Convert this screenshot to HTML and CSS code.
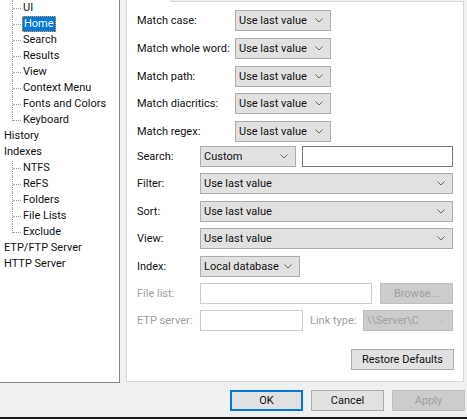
FILE: index.html
```html
<!DOCTYPE html>
<html>
<head>
<meta charset="utf-8">
<link rel="stylesheet" href="styles.css">
</head>
<body>
<div class="window">
  <div class="main">
    <div class="tree">
      <ul class="tree-list">
        <li class="node child">UI</li>
        <li class="node child"><span class="sel">Home</span></li>
        <li class="node child">Search</li>
        <li class="node child">Results</li>
        <li class="node child">View</li>
        <li class="node child">Context Menu</li>
        <li class="node child">Fonts and Colors</li>
        <li class="node child last">Keyboard</li>
        <li class="node root">History</li>
        <li class="node root">Indexes</li>
        <li class="node child first">NTFS</li>
        <li class="node child">ReFS</li>
        <li class="node child">Folders</li>
        <li class="node child">File Lists</li>
        <li class="node child last">Exclude</li>
        <li class="node root">ETP/FTP Server</li>
        <li class="node root">HTTP Server</li>
      </ul>
    </div>
    <div class="page">
      <div class="section match">
        <div class="row"><span class="label w1">Match case:</span><div class="select s-match"><span>Use last value</span><svg class="chev" width="8" height="5" viewBox="0 0 8 5"><path d="M0.5 0.5 L4 4 L7.5 0.5" fill="none" stroke="#6b6b6b" stroke-width="1"/></svg></div></div>
        <div class="row"><span class="label w1">Match whole word:</span><div class="select s-match"><span>Use last value</span><svg class="chev" width="8" height="5" viewBox="0 0 8 5"><path d="M0.5 0.5 L4 4 L7.5 0.5" fill="none" stroke="#6b6b6b" stroke-width="1"/></svg></div></div>
        <div class="row"><span class="label w1">Match path:</span><div class="select s-match"><span>Use last value</span><svg class="chev" width="8" height="5" viewBox="0 0 8 5"><path d="M0.5 0.5 L4 4 L7.5 0.5" fill="none" stroke="#6b6b6b" stroke-width="1"/></svg></div></div>
        <div class="row"><span class="label w1">Match diacritics:</span><div class="select s-match"><span>Use last value</span><svg class="chev" width="8" height="5" viewBox="0 0 8 5"><path d="M0.5 0.5 L4 4 L7.5 0.5" fill="none" stroke="#6b6b6b" stroke-width="1"/></svg></div></div>
        <div class="row"><span class="label w1">Match regex:</span><div class="select s-match"><span>Use last value</span><svg class="chev" width="8" height="5" viewBox="0 0 8 5"><path d="M0.5 0.5 L4 4 L7.5 0.5" fill="none" stroke="#6b6b6b" stroke-width="1"/></svg></div></div>
      </div>
      <div class="section search">
        <div class="row"><span class="label w2">Search:</span><div class="select s-search"><span>Custom</span><svg class="chev" width="8" height="5" viewBox="0 0 8 5"><path d="M0.5 0.5 L4 4 L7.5 0.5" fill="none" stroke="#6b6b6b" stroke-width="1"/></svg></div><div class="input i-search"></div></div>
        <div class="row"><span class="label w2">Filter:</span><div class="select s-wide"><span>Use last value</span><svg class="chev" width="8" height="5" viewBox="0 0 8 5"><path d="M0.5 0.5 L4 4 L7.5 0.5" fill="none" stroke="#6b6b6b" stroke-width="1"/></svg></div></div>
        <div class="row"><span class="label w2">Sort:</span><div class="select s-wide"><span>Use last value</span><svg class="chev" width="8" height="5" viewBox="0 0 8 5"><path d="M0.5 0.5 L4 4 L7.5 0.5" fill="none" stroke="#6b6b6b" stroke-width="1"/></svg></div></div>
        <div class="row"><span class="label w2">View:</span><div class="select s-wide"><span>Use last value</span><svg class="chev" width="8" height="5" viewBox="0 0 8 5"><path d="M0.5 0.5 L4 4 L7.5 0.5" fill="none" stroke="#6b6b6b" stroke-width="1"/></svg></div></div>
        <div class="row"><span class="label w2">Index:</span><div class="select s-index"><span>Local database</span><svg class="chev" width="8" height="5" viewBox="0 0 8 5"><path d="M0.5 0.5 L4 4 L7.5 0.5" fill="none" stroke="#6b6b6b" stroke-width="1"/></svg></div></div>
        <div class="row r-file"><span class="label w2 disabled">File list:</span><div class="input disabled i-file"></div><button class="btn btn-disabled b-browse">Browse...</button></div>
        <div class="row r-etp"><span class="label w2 disabled">ETP server:</span><div class="input disabled i-etp"></div><span class="label disabled l-link">Link type:</span><div class="select select-disabled s-link"><span>\\Server\C</span><svg class="chev" width="8" height="5" viewBox="0 0 8 5"><path d="M0.5 0.5 L4 4 L7.5 0.5" fill="none" stroke="#bdbdbd" stroke-width="1"/></svg></div></div>
      </div>
      <div class="restore-row"><button class="btn b-restore">Restore Defaults</button></div>
    </div>
  </div>
  <div class="footer">
    <button class="btn btn-default">OK</button>
    <button class="btn">Cancel</button>
    <button class="btn btn-disabled">Apply</button>
  </div>
</div>
</body>
</html>
```

FILE: styles.css
```css
* { box-sizing: border-box; }
html, body { margin: 0; padding: 0; }
body {
  background: #f0f0f0;
  font-family: Roboto, "Liberation Sans", sans-serif;
  font-size: 11px;
  color: #111;
  width: 467px;
  height: 419px;
  overflow: hidden;
}
.window {
  width: 467px;
  height: 419px;
  border-bottom: 2px solid #1a1a1a;
  display: flex;
  flex-direction: column;
}
.main {
  display: flex;
  height: 383px;
  flex: none;
}
.tree {
  width: 120px;
  height: 383px;
  background: #fff;
  border-right: 1px solid #828790;
  border-bottom: 1px solid #828790;
  overflow: hidden;
}
.tree-list {
  list-style: none;
  margin: 0;
  padding: 0;
}
.node {
  height: 16px;
  line-height: 16px;
  white-space: nowrap;
  position: relative;
}
.root { padding-left: 4px; }
.child { padding-left: 23px; }
.child::before {
  content: "";
  position: absolute;
  left: 13px;
  top: 8px;
  width: 8px;
  border-top: 1px dotted #a0a0a0;
}
.child::after {
  content: "";
  position: absolute;
  left: 12px;
  top: 0;
  height: 16px;
  border-left: 1px dotted #a0a0a0;
}
.child.last::after { height: 9px; }
.child.first::after { top: 1px; height: 15px; }
.sel {
  display: inline-block;
  margin-left: -1px;
  padding: 0 1px;
  height: 16px;
  line-height: 14px;
  background: #0078d7;
  color: #fff;
  border: 1px dotted #ff9a1a;
}

.page {
  margin-left: 6px;
  width: 338px;
  height: 382px;
  background: #fff;
  border: 1px solid #d9d9d9;
  border-top: none;
  position: relative;
  padding: 10px 9px 0 10px;
}
.page::before {
  content: "";
  position: absolute;
  top: 0;
  left: 44px;
  right: -1px;
  height: 2px;
  background: linear-gradient(#f0f0f0 1px, #d9d9d9 1px);
}
.page::after {
  content: "";
  position: absolute;
  top: 0;
  left: 44px;
  width: 1px;
  height: 2px;
  background: #d9d9d9;
}
.section {
  display: flex;
  flex-direction: column;
}
.match { gap: 6.75px; }
.search { gap: 6.4px; margin-top: 4px; }
.row {
  display: flex;
  align-items: center;
  height: 21px;
}
.label { flex: none; white-space: nowrap; }
.w1 { width: 98px; }
.w2 { width: 63px; }
.disabled { color: #a0a0a0; }
.select {
  flex: none;
  height: 21px;
  background: #e1e1e1;
  border: 1px solid #adadad;
  display: flex;
  align-items: center;
  justify-content: space-between;
  padding: 0 7px 0 3px;
  white-space: nowrap;
}
.select-disabled {
  background: #cccccc;
  border-color: #bfbfbf;
  color: #a0a0a0;
}
.chev { flex: none; }
.s-match { width: 96px; }
.s-search { width: 96px; }
.s-wide { width: 253px; }
.s-index { width: 100px; }
.s-link { width: 90px; }
.input {
  flex: none;
  height: 21px;
  background: #fff;
  border: 1px solid #7a7a7a;
}
.input.disabled { border-color: #cccccc; }
.i-search { width: 151px; margin-left: 6px; }
.i-file { width: 172px; }
.i-etp { width: 103px; }
.l-link { margin-left: 7px; width: 53px; }
.btn {
  font-family: Roboto, "Liberation Sans", sans-serif;
  font-size: 11px;
  height: 21px;
  width: 73px;
  padding: 0;
  background: #e1e1e1;
  border: 1px solid #adadad;
  color: #111;
  flex: none;
}
.btn-disabled {
  background: #cccccc;
  border-color: #bfbfbf;
  color: #a0a0a0;
}
.btn-default { border: 2px solid #0078d7; }
.b-browse { margin-left: 8px; }
.b-restore { width: 103px; }
.restore-row {
  display: flex;
  justify-content: flex-end;
  margin-top: 18px;
}
.footer {
  display: flex;
  justify-content: flex-end;
  gap: 8px;
  padding: 7px 2px 0 0;
}
```
